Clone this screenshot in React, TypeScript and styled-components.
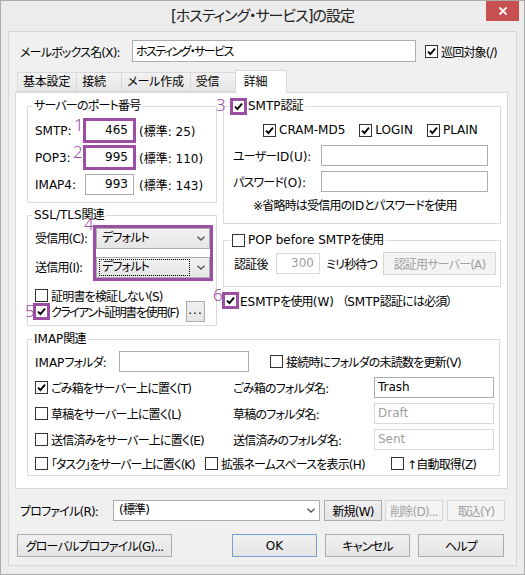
import React from "react";
import styled, { createGlobalStyle } from "styled-components";

const PURPLE = "#9b4ea3";

const Global = createGlobalStyle`
  html, body { margin: 0; padding: 0; background: #fff; }
  body {
    font-family: "DejaVu Sans", "Noto Sans CJK JP", sans-serif;
    font-size: 12px;
    letter-spacing: -0.8px;
    color: #000;
    font-feature-settings: "palt";
  }
  * { box-sizing: border-box; }
`;

const Latin = styled.span`
  letter-spacing: 0;
`;

const Kana = styled.span<{ $ls?: number }>`
  letter-spacing: ${(p) => p.$ls ?? -1.5}px;
`;

const Window = styled.div`
  width: 525px;
  height: 575px;
  background: #ececec;
  border: 1px solid #acacac;
  display: flex;
  flex-direction: column;
`;

const TitleBar = styled.div`
  flex: none;
  height: 30px;
  display: grid;
  grid-template-columns: 1fr auto 1fr;
  align-items: start;
`;

const Title = styled.div`
  grid-column: 2;
  font-family: "DejaVu Sans", "Noto Sans CJK JP", sans-serif;
  font-size: 15px;
  letter-spacing: -1px;
  line-height: 30px;
  color: #222;
  white-space: nowrap;
`;

const CloseBtn = styled.div`
  grid-column: 3;
  justify-self: end;
  width: 33px;
  height: 20px;
  margin-right: 5px;
  background: #c75050;
  display: flex;
  align-items: center;
  justify-content: center;
`;

const Client = styled.div`
  flex: 1;
  margin: 0 7px 8px;
  background: #f0f0f0;
  border: 1px solid #d6d6d6;
  padding: 8px 7px 0 6px;
  display: flex;
  flex-direction: column;
`;

const MailboxRow = styled.div`
  display: flex;
  align-items: center;
  height: 22px;
`;

const MailboxLabel = styled.span`
  width: 117px;
  padding-left: 5px;
  white-space: nowrap;
`;

const TextBox = styled.div<{ $w: number; $h?: number; $right?: boolean; $disabled?: boolean }>`
  width: ${(p) => p.$w}px;
  height: ${(p) => p.$h ?? 21}px;
  flex: none;
  background: #fff;
  border: 1px solid ${(p) => (p.$disabled ? "#d9d9d9" : "#abadb3")};
  color: ${(p) => (p.$disabled ? "#a0a0a0" : "#000")};
  display: flex;
  align-items: center;
  justify-content: ${(p) => (p.$right ? "flex-end" : "flex-start")};
  padding: 0 ${(p) => (p.$right ? 5 : 3)}px 1px;
  white-space: nowrap;
`;

const TabStrip = styled.div`
  margin-top: 8px;
  height: 23px;
  display: flex;
  align-items: flex-end;
  padding-left: 2px;
  position: relative;
  z-index: 1;
  margin-bottom: -1px;
`;

const Tab = styled.div<{ $active?: boolean }>`
  height: ${(p) => (p.$active ? 23 : 20)}px;
  min-width: ${(p) => (p.$active ? 52 : 46)}px;
  padding: ${(p) => (p.$active ? "3px 6px 0 8px" : "1px 6px 0 5px")};
  margin-left: -1px;
  margin-bottom: ${(p) => (p.$active ? 0 : 1)}px;
  border: 1px solid #d9d9d9;
  border-bottom: ${(p) => (p.$active ? "none" : "1px solid #d9d9d9")};
  background: ${(p) => (p.$active ? "#fff" : "linear-gradient(#f2f2f2, #e6e6e6)")};
  white-space: nowrap;
  line-height: 16px;
  letter-spacing: -0.2px;
  &:first-child { margin-left: 0; }
`;

const Panel = styled.div`
  flex: none;
  height: 397px;
  margin-right: 1px;
  background: #fff;
  border: 1px solid #d9d9d9;
  padding: 6px 7px 0 11px;
  display: flex;
  flex-direction: column;
`;

const TopArea = styled.div`
  display: grid;
  grid-template-columns: 190px 278px;
  column-gap: 6px;
  align-items: start;
`;

const Column = styled.div`
  display: flex;
  flex-direction: column;
`;

const Group = styled.fieldset<{ $pt?: number; $pb?: number; $mt?: number }>`
  margin: ${(p) => p.$mt ?? 0}px 0 0;
  min-width: 0;
  border: 1px solid #dcdcdc;
  padding: ${(p) => p.$pt ?? 6}px 6px ${(p) => p.$pb ?? 6}px 7px;
`;

const Legend = styled.legend`
  padding: 0 2px;
  margin-left: -3px;
  line-height: 14px;
  white-space: nowrap;
`;

const CheckLegend = styled.legend`
  padding: 0 2px 0 1px;
  line-height: 14px;
  display: flex;
`;

const PortRows = styled.div`
  display: flex;
  flex-direction: column;
  gap: 6px;
`;

const PortRow = styled.div`
  display: grid;
  grid-template-columns: 45px 49px auto;
  column-gap: 5px;
  align-items: center;
  white-space: nowrap;
  letter-spacing: 0;
`;

const Marked = styled.span<{ $off?: number }>`
  position: relative;
  display: inline-flex;
  outline: 3px solid ${PURPLE};
  outline-offset: ${(p) => p.$off ?? -1}px;
`;

const Badge = styled.span<{ $x: number; $y: number }>`
  position: absolute;
  left: ${(p) => p.$x}px;
  top: ${(p) => p.$y}px;
  color: ${PURPLE};
  font-family: "Noto Sans", sans-serif;
  font-weight: 300;
  font-size: 17px;
  letter-spacing: 0;
  line-height: 1;
  pointer-events: none;
`;

const SslRow = styled.div`
  display: flex;
  align-items: flex-start;
`;

const SslLabels = styled.div`
  width: 63px;
  display: flex;
  flex-direction: column;
  gap: 8px;
  white-space: nowrap;
`;

const SslLabel = styled.div`
  height: 21px;
  line-height: 22px;
`;

const SelectStack = styled.div`
  display: flex;
  flex-direction: column;
  gap: 8px;
`;

const Combo = styled.div<{ $w: number; $white?: boolean }>`
  width: ${(p) => p.$w}px;
  height: 21px;
  flex: none;
  border: 1px solid ${(p) => (p.$white ? "#abadb3" : "#acacac")};
  background: ${(p) => (p.$white ? "#fff" : "linear-gradient(#f2f2f2, #e5e5e5)")};
  display: flex;
  align-items: center;
  padding-left: 2px;
`;

const ComboText = styled.span<{ $focus?: boolean; $w?: number }>`
  flex: ${(p) => (p.$w ? "none" : 1)};
  width: ${(p) => (p.$w ? `${p.$w}px` : "auto")};
  height: 17px;
  line-height: 15px;
  padding: 0 2px;
  border: 1px ${(p) => (p.$focus ? "dotted #000" : "solid transparent")};
  white-space: nowrap;
`;

const ChevronBox = styled.span`
  width: 17px;
  margin-left: auto;
  display: flex;
  align-items: center;
  justify-content: center;
`;

const CheckRows = styled.div`
  margin-top: 10px;
  display: flex;
  flex-direction: column;
  gap: 1px;
`;

const CheckLine = styled.div`
  display: flex;
  align-items: center;
  height: 15px;
  white-space: nowrap;
`;

const CheckLabel = styled.label<{ $disabled?: boolean }>`
  display: inline-flex;
  align-items: center;
  gap: 3px;
  height: 14px;
  white-space: nowrap;
  color: ${(p) => (p.$disabled ? "#a0a0a0" : "#000")};
`;

const Box = styled.span`
  width: 13px;
  height: 13px;
  flex: none;
  border: 1px solid #333;
  background: #fff;
  display: inline-flex;
  align-items: center;
  justify-content: center;
`;

const Button = styled.div<{ $w: number; $h?: number; $disabled?: boolean; $default?: boolean }>`
  width: ${(p) => p.$w}px;
  height: ${(p) => p.$h ?? 23}px;
  flex: none;
  border: 1px solid ${(p) => (p.$disabled ? "#d5d5d5" : p.$default ? "#6fa1d6" : "#acacac")};
  background: ${(p) => (p.$disabled ? "#f4f4f4" : "linear-gradient(#f0f0f0, #e5e5e5)")};
  color: ${(p) => (p.$disabled ? "#a0a0a0" : "#000")};
  display: flex;
  align-items: center;
  justify-content: center;
  white-space: nowrap;
`;

const SmallButton = styled(Button)`
  margin: -3px 5px -3px auto;
  padding-bottom: 4px;
  letter-spacing: 1px;
`;

const SmtpBody = styled.div`
  display: flex;
  flex-direction: column;
`;

const MethodRow = styled.div`
  display: flex;
  gap: 14px;
  padding-left: 32px;
  height: 14px;
  align-items: center;
  letter-spacing: 0;
`;

const FieldRow = styled.div<{ $mt: number }>`
  display: flex;
  align-items: center;
  margin-top: ${(p) => p.$mt}px;
  padding-left: 2px;
  white-space: nowrap;
`;

const FieldLabel = styled.span<{ $w: number }>`
  width: ${(p) => p.$w}px;
  flex: none;
  white-space: nowrap;
`;

const Hint = styled.div`
  margin-top: 7px;
  padding-left: 22px;
  line-height: 14px;
  white-space: nowrap;
`;

const PopRow = styled.div`
  display: flex;
  align-items: center;
  height: 23px;
  padding-left: 3px;
  white-space: nowrap;
`;

const Spacer = styled.span<{ $w: number }>`
  width: ${(p) => p.$w}px;
  flex: none;
`;

const EsmtpRow = styled.div`
  margin-top: 6px;
  padding-left: 1px;
  display: flex;
  align-items: center;
  height: 14px;
  white-space: nowrap;
`;

const Aside = styled.span`
  margin-left: 8px;
`;

const ImapBody = styled.div`
  display: flex;
  flex-direction: column;
  gap: 5px;
`;

const ImapTop = styled.div`
  display: flex;
  align-items: center;
  height: 21px;
  white-space: nowrap;
`;

const ImapGrid = styled.div`
  display: grid;
  grid-template-columns: 198px 141px 120px;
  grid-auto-rows: 21px;
  row-gap: 5px;
  align-items: center;
  white-space: nowrap;
`;

const ImapLast = styled.div`
  display: grid;
  grid-template-columns: 170px 186px auto;
  align-items: center;
  height: 14px;
  margin-top: 1px;
`;

const ProfileRow = styled.div`
  margin-top: 10px;
  display: flex;
  align-items: center;
  height: 22px;
  padding-left: 5px;
  white-space: nowrap;
`;

const ActionRow = styled.div`
  margin-top: 13px;
  display: flex;
  align-items: center;
  padding-left: 2px;
  padding-right: 5px;
  gap: 8px;
`;

const Push = styled.span`
  margin-left: auto;
`;

const Tick = () => (
  <svg width="9" height="9" viewBox="0 0 9 9">
    <path d="M1 4.6 L3.4 7 L8 1.6" fill="none" stroke="#000" strokeWidth="1.9" />
  </svg>
);

const Chevron = () => (
  <svg width="8" height="5" viewBox="0 0 8 5">
    <polyline points="0.5,0.7 4,4 7.5,0.7" fill="none" stroke="#555" strokeWidth="1.3" />
  </svg>
);

type CheckProps = {
  checked?: boolean;
  disabled?: boolean;
  mark?: string;
  bx?: number;
  by?: number;
  children?: React.ReactNode;
};

function Check({ checked, disabled, mark, bx = -11, by = -4, children }: CheckProps) {
  const box = <Box>{checked ? <Tick /> : null}</Box>;
  return (
    <CheckLabel $disabled={disabled}>
      {mark ? (
        <Marked $off={-1}>
          {box}
          <Badge $x={bx} $y={by}>{mark}</Badge>
        </Marked>
      ) : (
        box
      )}
      {children}
    </CheckLabel>
  );
}

function Select({ w, text, focus, white, tw }: { w: number; text: string; focus?: boolean; white?: boolean; tw?: number }) {
  return (
    <Combo $w={w} $white={white}>
      <ComboText $focus={focus} $w={tw}>{text}</ComboText>
      <ChevronBox>
        <Chevron />
      </ChevronBox>
    </Combo>
  );
}

export default function App() {
  return (
    <>
      <Global />
      <Window>
        <TitleBar>
          <Title>[ホスティング・サービス]の設定</Title>
          <CloseBtn>
            <svg width="10" height="10" viewBox="0 0 10 10">
              <path d="M1.5 1.5 L8.5 8.5 M8.5 1.5 L1.5 8.5" stroke="#fff" strokeWidth="1.8" />
            </svg>
          </CloseBtn>
        </TitleBar>
        <Client>
          <MailboxRow>
            <MailboxLabel>メールボックス名(X):</MailboxLabel>
            <TextBox $w={284} $h={22}>
              <Kana $ls={-1.6}>ホスティング・サービス</Kana>
            </TextBox>
            <Spacer $w={9} />
            <Check checked>巡回対象(/)</Check>
          </MailboxRow>

          <TabStrip>
            <Tab>基本設定</Tab>
            <Tab>接続</Tab>
            <Tab>メール作成</Tab>
            <Tab>受信</Tab>
            <Tab $active>詳細</Tab>
          </TabStrip>

          <Panel>
            <TopArea>
              <Column>
                <Group $pt={7} $pb={7}>
                  <Legend>サーバーのポート番号</Legend>
                  <PortRows>
                    <PortRow>
                      <span>SMTP:</span>
                      <Marked>
                        <TextBox $w={49} $right>465</TextBox>
                        <Badge $x={-11} $y={-4}>1</Badge>
                      </Marked>
                      <span>(標準: 25)</span>
                    </PortRow>
                    <PortRow>
                      <span>POP3:</span>
                      <Marked>
                        <TextBox $w={49} $right>995</TextBox>
                        <Badge $x={-12} $y={-4}>2</Badge>
                      </Marked>
                      <span>(標準: 110)</span>
                    </PortRow>
                    <PortRow>
                      <span>IMAP4:</span>
                      <TextBox $w={49} $right>993</TextBox>
                      <span>(標準: 143)</span>
                    </PortRow>
                  </PortRows>
                </Group>

                <Group $mt={5} $pt={6} $pb={6}>
                  <Legend><Latin>SSL/TLS</Latin>関連</Legend>
                  <SslRow>
                    <SslLabels>
                      <SslLabel>受信用(C):</SslLabel>
                      <SslLabel>送信用(I):</SslLabel>
                    </SslLabels>
                    <Marked $off={0}>
                      <SelectStack>
                        <Select w={114} text="デフォルト" />
                        <Select w={114} text="デフォルト" focus tw={91} />
                      </SelectStack>
                      <Badge $x={-12} $y={-13}>4</Badge>
                    </Marked>
                  </SslRow>
                  <CheckRows>
                    <CheckLine>
                      <Check>証明書を検証しない(S)</Check>
                    </CheckLine>
                    <CheckLine>
                      <Check checked mark="5" bx={-10} by={-3}>
                        <Kana $ls={-1.5}>クライアント証明書を使用(F)</Kana>
                      </Check>
                      <SmallButton $w={19} $h={21}>...</SmallButton>
                    </CheckLine>
                  </CheckRows>
                </Group>
              </Column>

              <Column>
                <Group $pt={10} $pb={10}>
                  <CheckLegend>
                    <Check checked mark="3" bx={-16} by={-4}>
                      <span><Latin>SMTP</Latin>認証</span>
                    </Check>
                  </CheckLegend>
                  <SmtpBody>
                    <MethodRow>
                      <Check checked>CRAM-MD5</Check>
                      <Check checked>LOGIN</Check>
                      <Check checked>PLAIN</Check>
                    </MethodRow>
                    <FieldRow $mt={8}>
                      <FieldLabel $w={88}>ユーザー<Latin>ID(U):</Latin></FieldLabel>
                      <TextBox $w={167} />
                    </FieldRow>
                    <FieldRow $mt={5}>
                      <FieldLabel $w={88}>パスワード<Latin>(O):</Latin></FieldLabel>
                      <TextBox $w={167} />
                    </FieldRow>
                    <Hint>※省略時は受信用の<Latin>ID</Latin>とパスワードを使用</Hint>
                  </SmtpBody>
                </Group>

                <Group $mt={9} $pt={5} $pb={11}>
                  <CheckLegend>
                    <Check>
                      <span><Latin>POP before SMTP</Latin>を使用</span>
                    </Check>
                  </CheckLegend>
                  <PopRow>
                    <FieldLabel $w={42}>認証後</FieldLabel>
                    <TextBox $w={44} $right $disabled><Latin>300</Latin></TextBox>
                    <Spacer $w={6} />
                    <FieldLabel $w={57}>ミリ秒待つ</FieldLabel>
                    <Button $w={113} $disabled>認証用サーバー(A)</Button>
                  </PopRow>
                </Group>

                <EsmtpRow>
                  <Check checked mark="6" bx={-11} by={-8}>
                    <span><Latin>ESMTP</Latin>を使用<Latin>(W)</Latin></span>
                  </Check>
                  <Aside>（<Latin>SMTP</Latin>認証には必須）</Aside>
                </EsmtpRow>
              </Column>
            </TopArea>

            <Group $mt={6} $pt={5} $pb={5}>
              <Legend><Latin>IMAP</Latin>関連</Legend>
              <ImapBody>
                <ImapTop>
                  <FieldLabel $w={84}><Latin>IMAP</Latin>フォルダ:</FieldLabel>
                  <TextBox $w={130} />
                  <Spacer $w={21} />
                  <Check>接続時にフォルダの未読数を更新(V)</Check>
                </ImapTop>
                <ImapGrid>
                  <Check checked>ごみ箱をサーバー上に置く(T)</Check>
                  <span>ごみ箱のフォルダ名:</span>
                  <TextBox $w={120}><Latin>Trash</Latin></TextBox>
                  <Check>草稿をサーバー上に置く(L)</Check>
                  <span>草稿のフォルダ名:</span>
                  <TextBox $w={120} $disabled><Latin>Draft</Latin></TextBox>
                  <Check>送信済みをサーバー上に置く(E)</Check>
                  <span>送信済みのフォルダ名:</span>
                  <TextBox $w={120} $disabled><Latin>Sent</Latin></TextBox>
                </ImapGrid>
                <ImapLast>
                  <Check>
                    <Kana $ls={-1.1}>「タスク」をサーバー上に置く(K)</Kana>
                  </Check>
                  <Check>拡張ネームスペースを表示(H)</Check>
                  <Check>↑自動取得(Z)</Check>
                </ImapLast>
              </ImapBody>
            </Group>
          </Panel>

          <ProfileRow>
            <FieldLabel $w={93}>プロファイル(R):</FieldLabel>
            <Select w={207} text="(標準)" white />
            <Spacer $w={4} />
            <Button $w={58} $h={21}>新規(W)</Button>
            <Spacer $w={3} />
            <Button $w={58} $h={21} $disabled>削除(D)...</Button>
            <Spacer $w={4} />
            <Button $w={58} $h={21} $disabled>取込(Y)</Button>
          </ProfileRow>

          <ActionRow>
            <Button $w={155}>グローバルプロファイル(G)...</Button>
            <Push />
            <Button $w={85} $default><Latin>OK</Latin></Button>
            <Button $w={85}>キャンセル</Button>
            <Button $w={86}>ヘルプ</Button>
          </ActionRow>
        </Client>
      </Window>
    </>
  );
}
